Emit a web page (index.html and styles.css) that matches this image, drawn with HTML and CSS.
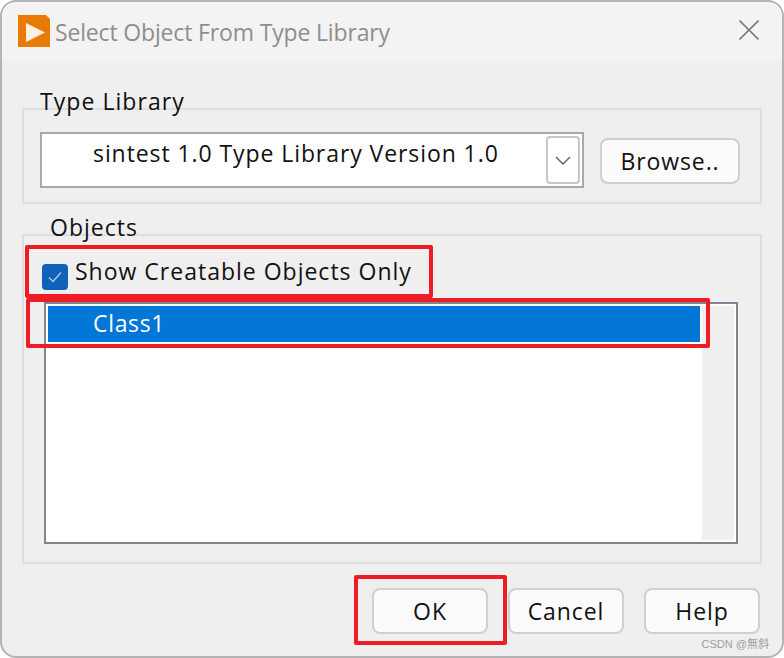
FILE: index.html
```html
<!DOCTYPE html>
<html lang="en">
<head>
    <meta charset="UTF-8">
    <meta name="viewport" content="width=device-width, initial-scale=1.0">
    <title>Select Object From Type Library</title>
    <link rel="stylesheet" href="styles.css">
</head>
<body>
    <div class="window">
        <header class="titlebar">
            <svg class="logo" width="32" height="32" viewBox="0 0 32 32">
                <path d="M0 0H28L32 4V32H0Z" fill="#e97a06"/>
                <path d="M8 8L27 17.5L8 27Z" fill="#fdf1e2"/>
            </svg>
            <span class="title">Select Object From Type Library</span>
            <svg class="close" width="20" height="20" viewBox="0 0 20 20">
                <path d="M0.5 0.5L19.5 19.5M19.5 0.5L0.5 19.5" stroke="#7c7c7c" stroke-width="1.6" fill="none"/>
            </svg>
        </header>

        <section class="group group-library">
            <span class="legend">Type Library</span>
            <div class="combo">
                <span class="combo-text">sintest 1.0 Type Library Version 1.0</span>
                <span class="combo-arrow">
                    <svg width="16" height="9" viewBox="0 0 16 9">
                        <path d="M1 1L8 8L15 1" stroke="#606060" stroke-width="1.4" fill="none"/>
                    </svg>
                </span>
            </div>
            <button class="btn btn-browse">Browse..</button>
        </section>

        <section class="group group-objects">
            <span class="legend">Objects</span>
            <label class="check-row">
                <span class="checkbox">
                    <svg width="16" height="14" viewBox="0 0 16 14">
                        <path d="M2 7.5L6 11.5L14 2.5" stroke="#a9cbee" stroke-width="1.4" fill="none"/>
                    </svg>
                </span>
                <span class="check-label">Show Creatable Objects Only</span>
            </label>
            <div class="list">
                <div class="list-main">
                    <div class="list-item">Class1</div>
                </div>
                <div class="list-scroll"></div>
            </div>
        </section>

        <footer class="actions">
            <button class="btn">OK</button>
            <button class="btn">Cancel</button>
            <button class="btn">Help</button>
        </footer>

        <!-- red annotations drawn over the dialog -->
        <div class="mark mark-check"></div>
        <div class="mark mark-item"></div>
        <div class="mark mark-ok"></div>
        <span class="watermark">CSDN @無斜</span>
    </div>
</body>
</html>
```

FILE: styles.css
```css
* {
    box-sizing: border-box;
}
body {
    margin: 0;
    background-color: #fff;
    font-family: "Open Sans", "Noto Sans CJK SC", sans-serif;
    color: #111;
}
.window {
    position: relative;
    width: 784px;
    height: 658px;
    border: 2px solid #b4b4b4;
    border-radius: 16px;
    background-color: #efefef;
    overflow: hidden;
}
.titlebar {
    height: 60px;
    padding-left: 16px;
    display: flex;
    align-items: flex-start;
    background-color: #f3f3f3;
}
.logo {
    margin-top: 13px;
}
.title {
    margin-left: 5px;
    margin-top: 14px;
    font-size: 23px;
    letter-spacing: -0.16px;
    line-height: 32px;
    color: #8e8e8e;
}
.close {
    margin-left: auto;
    margin-right: 23px;
    margin-top: 18px;
}
.group {
    position: relative;
    margin: 0 20px;
    border: 2px solid #dedede;
}
.group-library {
    margin-top: 46px;
    height: 96px;
    padding: 22px 0 0 16px;
    display: flex;
    align-items: flex-start;
}
.group-objects {
    margin-top: 30px;
    height: 330px;
    padding: 28px 0 0 18px;
}
.legend {
    position: absolute;
    top: -25px;
    height: 32px;
    padding: 0 6px 0 4px;
    font-size: 23px;
    line-height: 32px;
    background: linear-gradient(#efefef, #efefef) no-repeat 0 25px / 100% 7px;
}
.group-library .legend {
    left: 12px;
    width: 354px;
    letter-spacing: 1.05px;
}
.group-objects .legend {
    left: 14px;
    width: 232px;
    padding-left: 12px;
    letter-spacing: 1px;
}
.combo {
    width: 544px;
    height: 56px;
    border: 2px solid #a8a8b0;
    background-color: #fff;
    display: flex;
    padding: 2px;
}
.combo-text {
    flex: 1;
    padding-left: 49px;
    padding-top: 1px;
    font-size: 23px;
    letter-spacing: 0.92px;
    line-height: 32px;
}
.combo-arrow {
    width: 34px;
    height: 48px;
    border: 2px solid #c8c8c8;
    border-radius: 4px;
    display: flex;
    align-items: center;
    justify-content: center;
}
.btn {
    width: 116px;
    height: 46px;
    padding: 0;
    border: 2px solid #cfcfcf;
    border-radius: 8px;
    background-color: #fbfbfb;
    font-family: inherit;
    font-size: 23px;
    letter-spacing: 0.9px;
    color: #111;
}
.btn-browse {
    width: 140px;
    margin: 6px 0 0 16px;
}
.check-row {
    height: 38px;
    display: flex;
    align-items: flex-start;
}
.checkbox {
    width: 26px;
    height: 26px;
    border-radius: 4px;
    background-color: #0f62b8;
    display: flex;
    align-items: center;
    justify-content: center;
}
.check-label {
    margin-left: 7px;
    margin-top: -9px;
    font-size: 23px;
    letter-spacing: 1px;
    line-height: 32px;
}
.list {
    width: 694px;
    height: 242px;
    margin-left: 2px;
    border: 2px solid #808590;
    background-color: #fff;
    padding: 2px;
    display: flex;
}
.list-main {
    flex: 1;
    padding-right: 2px;
}
.list-item {
    height: 36px;
    padding-left: 45px;
    background-color: #0277d6;
    color: #fff;
    font-size: 23px;
    letter-spacing: 0.67px;
    line-height: 35px;
}
.list-scroll {
    width: 32px;
    background-color: #efefef;
}
.actions {
    margin-top: 24px;
    padding-right: 22px;
    display: flex;
    justify-content: flex-end;
    gap: 20px;
}
.mark {
    position: absolute;
    border: 4px solid #ee1c25;
    border-radius: 2px;
}
.mark-check {
    left: 23px;
    top: 243px;
    width: 408px;
    height: 53px;
}
.mark-item {
    left: 24px;
    top: 296px;
    width: 684px;
    height: 50px;
}
.mark-ok {
    left: 352px;
    top: 573px;
    width: 153px;
    height: 70px;
}
.watermark {
    position: absolute;
    right: 13px;
    bottom: 5px;
    font-family: "Liberation Sans", "Noto Sans CJK SC", sans-serif;
    font-size: 11px;
    line-height: 14px;
    color: #a0a0a0;
}
```
